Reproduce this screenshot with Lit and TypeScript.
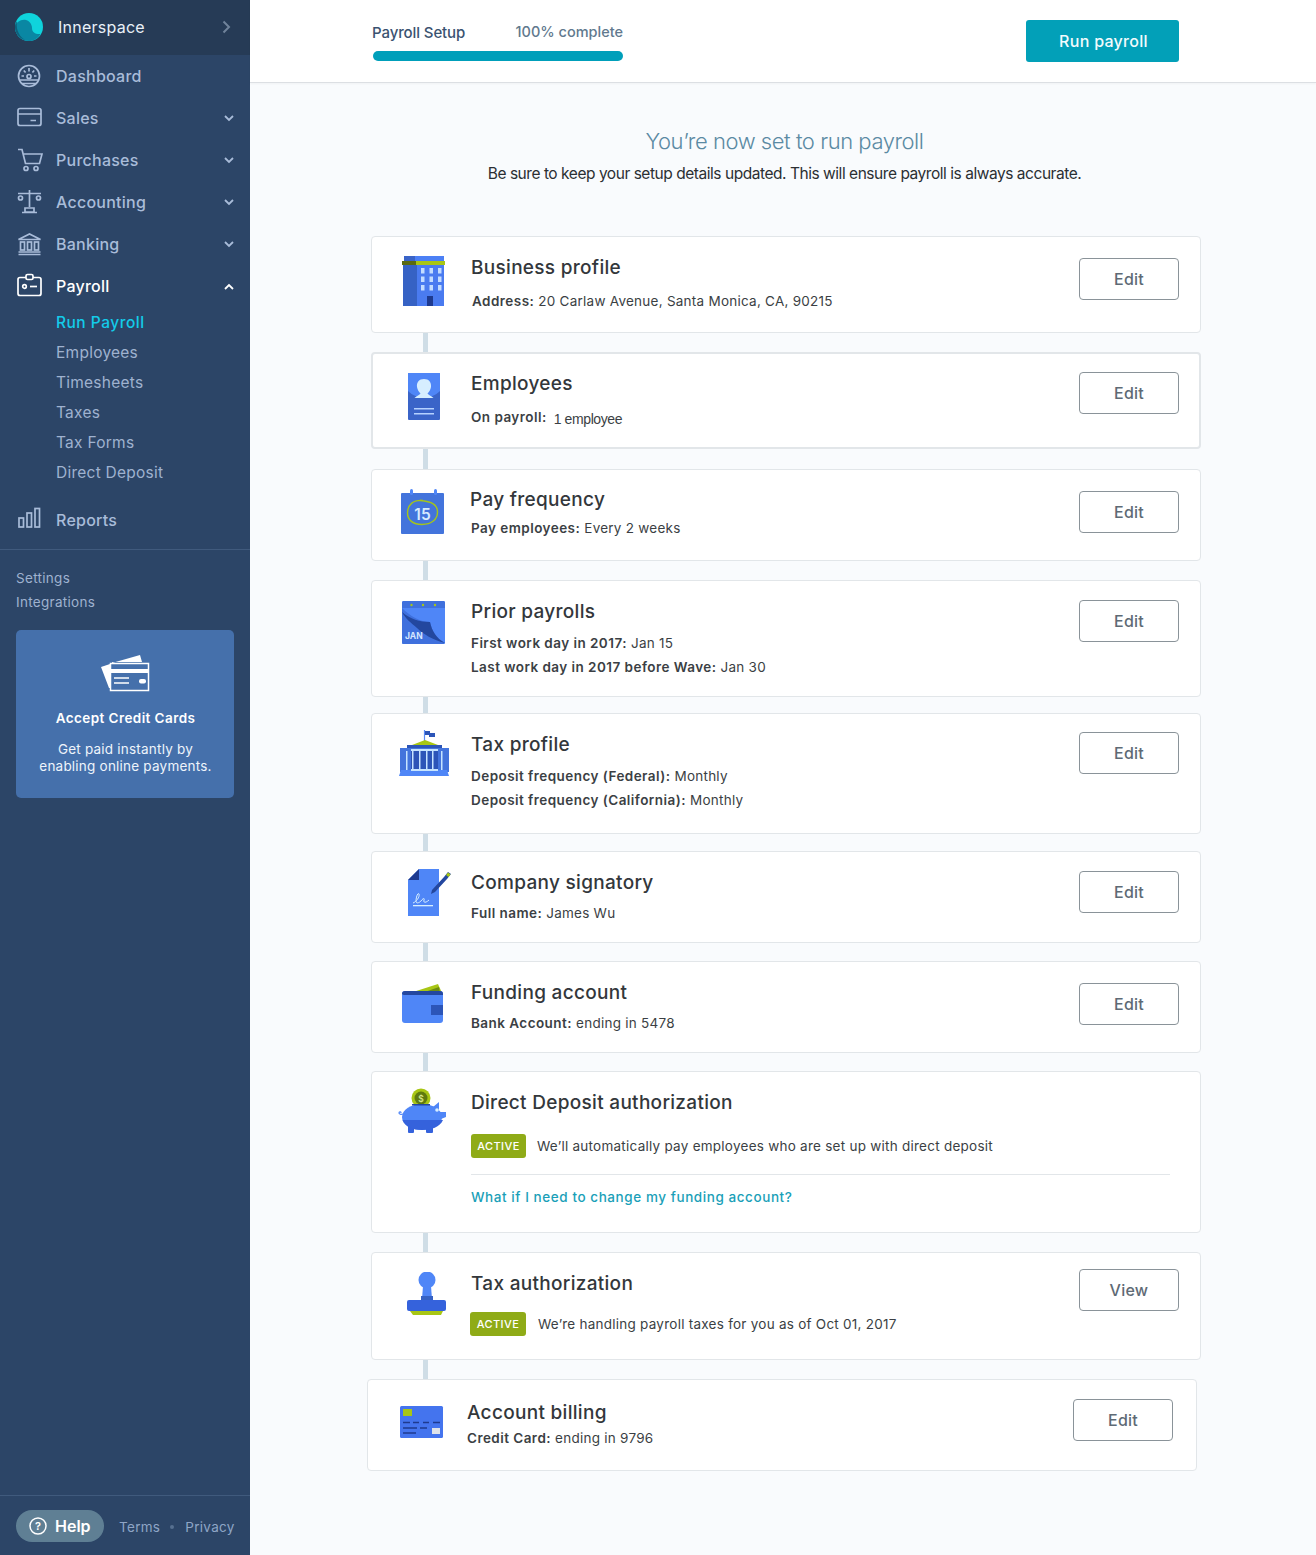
import { LitElement, html, css, svg } from "lit";
import { customElement } from "lit/decorators.js";

const navIcons: Record<string, any> = {
  dash: svg`<g transform="translate(-1 0)"><circle cx="13" cy="13" r="10.500"/><path d="M3.500 17h19M6 20.500h14M13 5v3.500M7.800 7.500l1.800 2M18.200 7.500l-1.800 2M5.500 13h2.500M18 13h2.500"/><circle cx="13" cy="13.500" r="2"/></g>`,
  card: svg`<rect x="1" y="3.500" width="23" height="17" rx="2"/><path d="M1 9h23M13.500 15.500h5.500"/>`,
  cart: svg`<path d="M1 2.500h4l3.500 14h14L25 7H6.500"/><circle cx="9" cy="21.500" r="2"/><circle cx="19" cy="21.500" r="2"/>`,
  scale: svg`<path d="M12.500 1v17M1 4.500h23M8 19h9v4H8zM5 23.500h15"/><circle cx="3.500" cy="9" r="2"/><circle cx="21.500" cy="9" r="2"/>`,
  bank: svg`<path d="M1.500 8.500 12.500 3l11 5.500zM1.500 23.500h22M1.500 21h22"/><rect x="3.500" y="11" width="4" height="8"/><rect x="10.500" y="11" width="4" height="8"/><rect x="17.500" y="11" width="4" height="8"/>`,
  payroll: svg`<rect x="1" y="4.500" width="23" height="18" rx="2"/><rect x="9" y="1.500" width="7" height="5" rx="1.500" fill="#2c4567"/><circle cx="7.500" cy="13.500" r="1.800"/><path d="M13 13.500h7"/>`,
  reports: svg`<rect x="2" y="11" width="4.500" height="9"/><rect x="10" y="6" width="4.500" height="14"/><rect x="18" y="1.500" width="4.500" height="18.500"/>`,
};

const icons: Record<string, any> = {
  building: html`<svg width="44" height="50" viewBox="0 0 44 50"><rect x="2" y="0" width="40" height="6" fill="#4c80f5"/><rect x="2" y="0" width="11" height="6" fill="#3a64c8"/><rect x="1" y="6" width="41" height="44" fill="#4a7bf0"/><rect x="1" y="6" width="14" height="44" fill="#3662c4"/><rect x="0" y="5" width="43" height="4" fill="#a8c614"/><rect x="0" y="5" width="14" height="4" fill="#5a6a10"/>${[0, 1, 2].map(r => [0, 1, 2].map(c => svg`<rect x="${19 + c * 8.500}" y="${12 + r * 8.500}" width="3.500" height="5.500" fill="#c3dcff"/>`))}<rect x="25" y="40" width="6" height="10" fill="#1e3a8f"/></svg>`,
  employee: html`<svg width="32" height="48" viewBox="0 0 32 48"><rect width="32" height="47" rx="1" fill="#3a64c8"/><path d="M0 1a1 1 0 0 1 1-1h30a1 1 0 0 1 1 1v17c-9 9-23 9-32 0z" fill="#4f86f7"/><path d="M16 6c5 0 7.500 3.500 7 8-.3 2.500-2 5-3.500 6.500 1 1.500 3.500 2 6 4.500H6.500c2.500-2.500 5-3 6-4.500C11 19 9.300 16.500 9 14c-.5-4.500 2-8 7-8z" fill="#d6eeff"/><path d="M6 35h20v1.500H6zM6 40h20v1.500H6z" fill="#b5d2ff"/></svg>`,
  calendar: html`<svg width="44" height="46" viewBox="0 0 44 46"><rect y="4" width="43" height="41" rx="1" fill="#4374dc"/><rect x="9" y="0" width="3" height="6" rx="1.500" fill="#4f86f7"/><rect x="33" y="0" width="3" height="6" rx="1.500" fill="#4f86f7"/><path d="M22 11.500c-10-1-15.500 4.500-15.500 12.500 0 7 5.500 11.500 14.500 11.500 9.500 0 15.500-5 15.500-12.500S31 12.500 19 11.500" fill="none" stroke="#a5c51a" stroke-width="1.400"/><text x="21.500" y="30.500" text-anchor="middle" font-family="Inter" font-size="15.500" font-weight="600" fill="#d7ebff">15</text></svg>`,
  jan: html`<svg width="43" height="43" viewBox="0 0 43 43"><rect width="43" height="43" rx="1.500" fill="#4f86f7"/><path d="M0 7h43v-5.500a1.500 1.500 0 0 0-1.500-1.500h-40a1.500 1.500 0 0 0-1.500 1.500z" fill="#3f70dd"/><circle cx="9.500" cy="4" r="1.200" fill="#a8c614"/><circle cx="21" cy="4" r="1.200" fill="#a8c614"/><circle cx="33" cy="4" r="1.200" fill="#a8c614"/><path d="M0 7v34.500a1.500 1.500 0 0 0 1.500 1.500h40L43 42C34 37 30 30 28 21c-10 0-20-6-28-14z" fill="#3f70dd"/><path d="M0 11c8 7 18 10 28 10 2 9 6 16 15 21-12-3-22-9-28-15C9 22 3 17 0 11z" fill="#23479f"/><text x="3" y="38" font-family="Inter" font-size="8.500" font-weight="700" fill="#d6e6ff">JAN</text></svg>`,
  capitol: html`<svg width="50" height="46" viewBox="0 0 50 46"><path d="M25.500 0v12" stroke="#5b8cf5" stroke-width="1.200"/><path d="M26 1h5v2h5v4h-6V5h-4z" fill="#2c55b8"/><path d="M13 15l13-5 13 5z" fill="#a8c614"/><rect x="8" y="15" width="35" height="5" fill="#2c55b8"/><rect x="1" y="18" width="49" height="24" fill="#4374dc"/><path d="M0 46l2-6h46l2 6z" fill="#4f86f7"/><rect x="12" y="20" width="27" height="20" fill="#2c55b8"/><path d="M12 19h27v2H12zM12 39h27v2H12z" fill="#c6e4ff"/>${[7, 13, 20, 27, 33, 42].map(x => svg`<rect x="${x}" y="21" width="1.500" height="19" fill="#c6e4ff"/>`)}</svg>`,
  sign: html`<svg width="44" height="48" viewBox="0 0 44 48"><path d="M11 0h20v47H0V11z" fill="#4f86f7"/><path d="M11 0v11H0z" fill="#1e3a8f"/><path d="M36 8 40 3l3 2-4 5-12 13-4 2 1-4z" fill="#23479f"/><path d="M38 6l2-2.500 2.500 2-2 2.500z" fill="#a8c614"/><path d="M5 34c3-1 7-6 6-9-1-2-3 3-3 7 0 3 3 2 5 0 2-3 4-3 3-1-1 3 2 3 5 0" fill="none" stroke="#d6eeff" stroke-width="1"/><rect x="5" y="36" width="20" height="1.300" fill="#d6eeff"/></svg>`,
  wallet: html`<svg width="44" height="42" viewBox="0 0 44 42"><path d="M8 9 36 0l4 9z" fill="#a8c614"/><path d="M20 9 37 3l1 6z" fill="#6d8b12"/><rect y="7" width="41" height="32" rx="3" fill="#4f86f7"/><path d="M0 10a3 3 0 0 1 3-3h35a3 3 0 0 1 3 3v1H3a3 3 0 0 1-3-1z" fill="#23479f"/><path d="M29 21h12v10H29z" fill="#2c55b8"/></svg>`,
  piggy: html`<svg width="50" height="46" viewBox="0 0 50 46"><circle cx="24" cy="10" r="9.500" fill="#a8c614"/><circle cx="24" cy="10" r="6.500" fill="#5f7a10"/><text x="24" y="13.500" text-anchor="middle" font-family="Inter" font-size="8.500" font-weight="600" fill="#d7e88a">$</text><path d="M36 19l6-5v9zM42 24h7v5l-5 2z" fill="#4f86f7"/><ellipse cx="25" cy="29" rx="20" ry="13" fill="#4f86f7"/><path d="M11 38h6v6a1 1 0 0 1-1 1h-4a1 1 0 0 1-1-1zM29 38h7v6a1 1 0 0 1-1 1h-5a1 1 0 0 1-1-1z" fill="#3562dc"/><path d="M5.500 32H46c-3 7-12 10-21 10S8 39 5.500 32z" fill="#3562dc"/><rect x="15" y="16" width="18" height="1.500" fill="#23479f"/><circle cx="40" cy="22" r="1.800" fill="#d6eeff"/><path d="M6 26c-2 1-4 0-4-1s2-2 2 0" fill="none" stroke="#4f86f7" stroke-width="1.200"/></svg>`,
  stamp: html`<svg width="40" height="44" viewBox="0 0 40 44"><circle cx="20" cy="8" r="8.500" fill="#4f86f7"/><path d="M16 14h8l1 13h-10z" fill="#4f86f7"/><rect x="14" y="24" width="12" height="6" fill="#3662c4"/><rect y="28" width="39" height="11" rx="2" fill="#3562dc"/><path d="M3 39h33l-2 4H6z" fill="#a8c614"/></svg>`,
  ccard: html`<svg width="44" height="32" viewBox="0 0 44 32"><rect width="43" height="32" rx="1.500" fill="#4474ee"/><rect x="3" y="3" width="9" height="7" fill="#a8c614"/><path d="M3 16.500h7M13 16.500h6M23 16.500h6M33 16.500h7" stroke="#1e3a8f" stroke-width="1.500"/><path d="M3 22h14M20 22h7" stroke="#1e3a8f" stroke-width="1.500"/><path d="M3 27h13" stroke="#1e3a8f" stroke-width="1.500"/><rect x="32" y="22" width="8" height="6" fill="#dfe3ea"/></svg>`,
};

interface Line { b?: string; t: string; }
interface Card {
  h: number; top: number; icon: string; iconTop: number; iconLeft: number; title: string; tx?: number; lines: Line[];
  gap: number; btn: string; btnTop: number; thick?: boolean; next: number; active?: string; extra?: boolean; shift?: boolean; bx?: number;
}

const cards: Card[] = [
  { h: 97, top: 17, icon: "building", iconTop: 19, iconLeft: 30, title: "Business profile", tx: 1, lines: [{ b: "Address:", t: "20 Carlaw Avenue, Santa Monica, CA, 90215" }], gap: 7, btn: "Edit", btnTop: 21, next: 19 },
  { h: 97, top: 17, icon: "employee", iconTop: 19, iconLeft: 36, title: "Employees", lines: [{ b: "On payroll:", t: "1 employee" }], gap: 7, btn: "Edit", btnTop: 18, thick: true, next: 20 },
  { h: 92, top: 16, icon: "calendar", iconTop: 19, iconLeft: 29, title: "Pay frequency", tx: -1, lines: [{ b: "Pay employees:", t: "Every 2 weeks" }], gap: 2, btn: "Edit", btnTop: 21, next: 19 },
  { h: 117, top: 17, icon: "jan", iconTop: 20, iconLeft: 30, title: "Prior payrolls", lines: [{ b: "First work day in 2017:", t: "Jan 15" }, { b: "Last work day in 2017 before Wave:", t: "Jan 30" }], gap: 5, btn: "Edit", btnTop: 19, next: 16 },
  { h: 121, top: 17, icon: "capitol", iconTop: 16, iconLeft: 27, title: "Tax profile", lines: [{ b: "Deposit frequency (Federal):", t: "Monthly" }, { b: "Deposit frequency (California):", t: "Monthly" }], gap: 5, btn: "Edit", btnTop: 18, next: 17 },
  { h: 92, top: 17, icon: "sign", iconTop: 17, iconLeft: 36, title: "Company signatory", lines: [{ b: "Full name:", t: "James Wu" }], gap: 4, btn: "Edit", btnTop: 19, next: 18 },
  { h: 92, top: 17, icon: "wallet", iconTop: 22, iconLeft: 30, title: "Funding account", lines: [{ b: "Bank Account:", t: "ending in 5478" }], gap: 4, btn: "Edit", btnTop: 21, next: 18 },
  { h: 162, top: 17, icon: "piggy", iconTop: 16, iconLeft: 25, title: "Direct Deposit authorization", lines: [], active: "We’ll automatically pay employees who are set up with direct deposit", extra: true, gap: 17, btn: "", btnTop: 0, next: 19 },
  { h: 108, top: 17, icon: "stamp", iconTop: 19, iconLeft: 35, title: "Tax authorization", lines: [], active: "We’re handling payroll taxes for you as of Oct 01, 2017", bx: -1, gap: 14, btn: "View", btnTop: 16, next: 19 },
  { h: 92, top: 19, icon: "ccard", iconTop: 26, iconLeft: 32, title: "Account billing", lines: [{ b: "Credit Card:", t: "ending in 9796" }], gap: -1, btn: "Edit", btnTop: 19, next: 0, shift: true },
];

@customElement("app-root")
export class AppRoot extends LitElement {
  static styles = css`
    :host { display: block; width: 1316px; height: 1555px; font-family: Inter, "Liberation Sans", sans-serif; background: #f9fbfd; overflow: hidden; }
    * { box-sizing: border-box; }
    .page { display: flex; height: 1555px; }
    .side { width: 250px; flex: none; height: 100%; background: #2c4567; display: flex; flex-direction: column; color: #a9bcd9; }
    .org { height: 55px; background: #263b56; display: flex; align-items: center; padding: 0 19px 2px 15px; color: #e9f0f8; font-size: 16px; letter-spacing: .25px; }
    .org svg:first-child { margin-right: 15px; }
    .org span { flex: 1; }
    .nav { display: flex; flex-direction: column; }
    .item { height: 42px; display: flex; align-items: center; padding: 0 16px 0 17px; font-size: 16px; font-weight: 500; letter-spacing: .25px; }
    .item .ic { width: 26px; height: 26px; margin-right: 13px; fill: none; stroke: currentColor; stroke-width: 1.700; flex: none; }
    .item span { flex: 1; }
    .item.on { color: #fff; }
    .chev { width: 10px; height: 7px; fill: none; stroke: currentColor; stroke-width: 1.800; flex: none; }
    .subs { display: flex; flex-direction: column; padding: 0 0 11px 56px; margin-top: 1px; }
    .sub { height: 30px; line-height: 30px; font-size: 15.500px; letter-spacing: .25px; color: #9fb2cf; }
    .sub.on { color: #13cbe9; font-weight: 500; letter-spacing: .5px; }
    .links { border-top: 1px solid #405a7d; margin-top: 8px; padding: 16px 16px 16px; font-size: 13.500px; letter-spacing: .3px; color: #9fb2cf; }
    .links div { height: 24px; line-height: 24px; }
    .promo { margin: 0 16px; height: 168px; background: #4570ab; border-radius: 5px; display: flex; flex-direction: column; align-items: center; color: #eef4fb; text-align: center; padding: 24px 0 0 1px; font-size: 13.500px; letter-spacing: .22px; line-height: 17px; }
    .promo b { font-weight: 600; color: #fff; margin-top: 16px; margin-bottom: 14px; letter-spacing: .42px; }
    .foot { margin-top: auto; height: 60px; border-top: 1px solid #405a7d; padding: 14px 0 0 16px; display: flex; align-items: flex-start; font-size: 13.500px; letter-spacing: .3px; color: #8fa5c6; }
    .help { width: 88px; flex: none; height: 32px; border-radius: 16px; background: #5f7f94; color: #fff; display: flex; align-items: center; padding-left: 13px; gap: 8px; font-size: 16px; font-weight: 600; margin-right: 15px; letter-spacing: 0; }
    .legal { display: flex; align-items: center; height: 32px; white-space: nowrap; padding-top: 2px; }
    .dot { width: 4px; height: 4px; border-radius: 50%; background: #57708f; margin: 0 11px 0 10px; }

    .main { flex: 1; min-width: 0; display: flex; flex-direction: column; }
    .top { height: 83px; background: #fff; border-bottom: 1px solid #dcdfe3; box-shadow: 0 1px 2px rgba(0,0,0,.04); display: flex; justify-content: space-between; padding: 20px 137px 0 122px; }
    .prog { width: 251px; }
    .prog-t { display: flex; justify-content: space-between; font-size: 14.500px; font-weight: 500; color: #3a5270; height: 31px; padding-top: 4px; letter-spacing: 0; }
    .prog-t span:first-child { font-size: 15px; letter-spacing: -.1px; margin-top: -1px; }
    .prog-t span + span { color: #61798e; font-weight: 500; margin-top: -1px; }
    .bar { height: 10px; background: #009fba; border-radius: 5px; margin-left: 1px; width: 250px; }
    .run { width: 153px; height: 42px; background: #02a0b8; color: #f2fbfd; border-radius: 3px; display: flex; align-items: center; justify-content: center; font-size: 16px; font-weight: 500; letter-spacing: .3px; padding-left: 2px; }
    .body { padding: 0 115px 0 121px; }
    h1 { margin: 44px 3px 0 0; text-align: center; font: 300 22px/28px Inter, sans-serif; color: #5b8aa3; letter-spacing: -.45px; }
    .lead { text-align: center; font: 400 15.500px/20px Inter, sans-serif; color: #2b2f33; margin: 9px 3px 52px 0; letter-spacing: -.46px; }
    .card { background: #fff; border: 1px solid #e2e6e9; border-radius: 4px; display: flex; position: relative; padding-right: 21px; }
    .card.thick { border-width: 2px; padding-right: 20px; }
    .card.shift { margin-left: -4px; margin-right: 4px; padding-right: 23px; }
    .icon { width: 99px; flex: none; }
    .thick .icon { width: 98px; }
    .icon svg { display: block; }
    .txt { flex: 1; min-width: 0; }
    h2 { margin: 0; font-size: 19px; line-height: 28px; font-weight: 500; color: #33373b; letter-spacing: .3px; }
    .ln { font-size: 13.500px; line-height: 24px; letter-spacing: .25px; color: #3b3f44; }
    .ln b { font-weight: 600; letter-spacing: .45px; }
    .ln .alt { font-family: "Liberation Sans", Arial, sans-serif; font-size: 14px; letter-spacing: -.4px; position: relative; top: 2px; margin-left: 3px; }
    .badge { width: 55px; flex: none; height: 24px; line-height: 24px; background: #8fab17; color: #fff; font-size: 11px; font-weight: 500; text-align: center; border-radius: 3px; letter-spacing: .4px; margin-right: 11px; }
    .act { font-size: 13.500px; letter-spacing: .25px; color: #3b3f44; line-height: 24px; display: flex; }
    .sep { border-top: 1px solid #e2e6e9; margin: 16px 9px 0 0; }
    .link { color: #1a9fb8; font-size: 13.500px; font-weight: 500; letter-spacing: .57px; margin-top: 12px; line-height: 20px; }
    .edit { width: 100px; height: 42px; border: 1px solid #8a9399; border-radius: 4px; display: flex; align-items: center; justify-content: center; font-size: 16px; font-weight: 500; color: #5e6a75; flex: none; letter-spacing: .25px; }
    .conn { width: 5px; margin-left: 52px; background: #cfdde6; }
  `;

  render() {
    const nav = [
      ["dash", "Dashboard"], ["card", "Sales"], ["cart", "Purchases"],
      ["scale", "Accounting"], ["bank", "Banking"],
    ] as [string, string][];
    return html`<div class="page">
      <aside class="side">
        <div class="org">
          <svg width="28" height="28" viewBox="0 0 28 28"><circle cx="14" cy="14" r="14" fill="#0fd3dc"/><path d="M0 14C1 9 6 6 11 7c4 1 6 5 6 8 0 4 3 6 7 6h1.500c-2.500 4.500-6.500 7-11.500 7C6 28 0 22 0 14z" fill="#0a87a3"/><path d="M0 14c0-2 .5-4 2-6-1 5 0 14 8 19-6-2-10-7-10-13z" fill="#0f5f7a"/></svg>
          <span>Innerspace</span>
          <svg width="9" height="14" viewBox="0 0 9 14"><path d="M1.500 1.500 7 7l-5.500 5.500" fill="none" stroke="#70839b" stroke-width="2"/></svg>
        </div>
        <nav class="nav">
          ${nav.map(([ic, label]) => html`<div class="item"><svg class="ic" viewBox="0 0 26 26">${navIcons[ic]}</svg><span>${label}</span>${label === "Dashboard" ? "" : html`<svg class="chev" viewBox="0 0 10 7"><path d="M1 1l4 4 4-4"/></svg>`}</div>`)}
          <div class="item on"><svg class="ic" viewBox="0 0 26 26">${navIcons.payroll}</svg><span>Payroll</span><svg class="chev" viewBox="0 0 10 7"><path d="M1 6l4-4 4 4"/></svg></div>
          <div class="subs">
            ${["Run Payroll", "Employees", "Timesheets", "Taxes", "Tax Forms", "Direct Deposit"].map((s, i) => html`<div class="sub ${i === 0 ? "on" : ""}">${s}</div>`)}
          </div>
          <div class="item"><svg class="ic" viewBox="0 0 26 26">${navIcons.reports}</svg><span>Reports</span></div>
        </nav>
        <div class="links"><div>Settings</div><div>Integrations</div></div>
        <div class="promo">
          <svg width="50" height="40" viewBox="0 0 50 40"><path d="M0 13l9-3v24h-1zM11 9 39 1l2 7H11z" fill="#fff"/><rect x="9.500" y="9.500" width="38" height="27" fill="#4570ab" stroke="#fff" stroke-width="1.500"/><rect x="10" y="15" width="37" height="4" fill="#fff"/><path d="M13 24h15M13 29h15" stroke="#fff" stroke-width="1.500"/><rect x="38" y="25" width="7" height="4.500" rx="2" fill="#fff"/></svg>
          <b>Accept Credit Cards</b>
          <div>Get paid instantly by<br>enabling online payments.</div>
        </div>
        <div class="foot">
          <div class="help"><svg width="18" height="18" viewBox="0 0 18 18"><circle cx="9" cy="9" r="8" fill="none" stroke="#fff" stroke-width="1.500"/><text x="9" y="13" text-anchor="middle" font-family="Inter" font-size="11" font-weight="600" fill="#fff">?</text></svg>Help</div>
          <div class="legal">Terms<span class="dot"></span>Privacy</div>
        </div>
      </aside>
      <main class="main">
        <div class="top">
          <div class="prog"><div class="prog-t"><span>Payroll Setup</span><span>100% complete</span></div><div class="bar"></div></div>
          <div class="run">Run payroll</div>
        </div>
        <div class="body">
          <h1>You’re now set to run payroll</h1>
          <p class="lead">Be sure to keep your setup details updated. This will ensure payroll is always accurate.</p>
          ${cards.map(c => html`
            <div class="card ${c.thick ? "thick" : ""} ${c.shift ? "shift" : ""}" style="height:${c.h}px">
              <div class="icon" style="padding:${c.iconTop}px 0 0 ${c.iconLeft - (c.thick ? 1 : 0)}px">${icons[c.icon]}</div>
              <div class="txt" style="padding-top:${c.top - (c.thick ? 1 : 0)}px">
                <h2 style="margin-left:${Math.min(c.tx ?? 0, 0)}px;margin-bottom:${c.gap}px">${c.title}</h2>
                ${c.lines.map((l, i) => html`<div class="ln" style="margin-left:${i === 0 && c.tx === 1 ? 1 : 0}px"><b>${l.b}</b> ${c.title === "Employees" ? html`<span class="alt">${l.t}</span>` : l.t}</div>`)}
                ${c.active ? html`<div class="act" style="margin-left:${c.bx ?? 0}px"><span class="badge" style="${c.bx ? "width:56px;margin-right:12px" : ""}">ACTIVE</span><span>${c.active}</span></div>` : ""}
                ${c.extra ? html`<div class="sep"></div><div class="link">What if I need to change my funding account?</div>` : ""}
              </div>
              ${c.btn ? html`<div class="edit" style="margin-top:${c.btnTop}px">${c.btn}</div>` : ""}
            </div>
            ${c.next ? html`<div class="conn" style="height:${c.next}px"></div>` : ""}
          `)}
        </div>
      </main>
    </div>`;
  }
}
